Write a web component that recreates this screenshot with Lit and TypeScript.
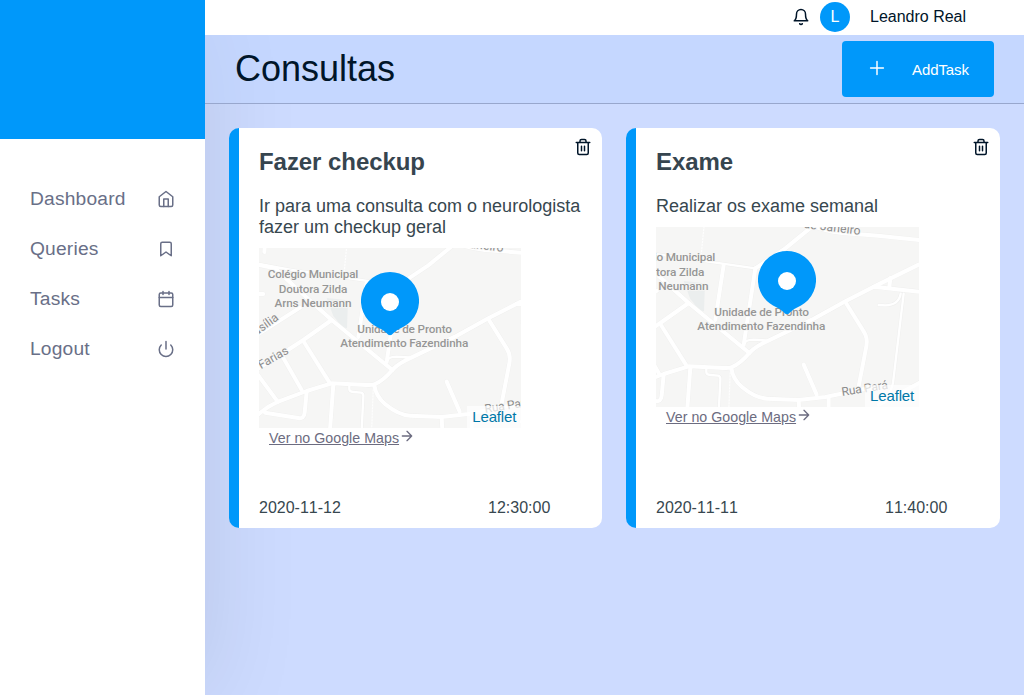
import { LitElement, html, css, svg } from "lit";
import { customElement, property } from "lit/decorators.js";

const stroked = (size: number, paths: unknown, width = 2) => html`
  <svg width=${size} height=${size} viewBox="0 0 24 24" fill="none" stroke="currentColor"
    stroke-width=${width} stroke-linecap="round" stroke-linejoin="round">${paths}</svg>`;

const homeIcon = svg`<path d="M3 9l9-7 9 7v11a2 2 0 0 1-2 2H5a2 2 0 0 1-2-2z"/><path d="M9 22V12h6v10"/>`;
const bookmarkIcon = svg`<path d="M19 21l-7-5-7 5V5a2 2 0 0 1 2-2h10a2 2 0 0 1 2 2z"/>`;
const calendarIcon = svg`<rect x="3" y="4" width="18" height="18" rx="2"/><path d="M16 2v4M8 2v4M3 10h18"/>`;
const powerIcon = svg`<path d="M18.36 6.64a9 9 0 1 1-12.73 0M12 2v10"/>`;
const bellIcon = svg`<path d="M18 8A6 6 0 0 0 6 8c0 7-3 9-3 9h18s-3-2-3-9M13.73 21a2 2 0 0 1-3.46 0"/>`;
const plusIcon = svg`<path d="M12 5v14M5 12h14"/>`;
const trashIcon = svg`<path d="M3 6h18M19 6v14a2 2 0 0 1-2 2H7a2 2 0 0 1-2-2V6m3 0V4a2 2 0 0 1 2-2h4a2 2 0 0 1 2 2v2M10 11v6M14 11v6"/>`;
const arrowIcon = svg`<path d="M5 12h14M12 5l7 7-7 7"/>`;

const wideRoads = [
  "M920 125L798 185L700 235L600 290L450 362Q425 375 412 390Q385 422 360 432Q350 436 335 435L230 430L155 453L70 485Q35 500 5 528",
  "M-110 20L12 75L60 85L130 150L230 240L412 390",
  "M600 11L520 76L430 136",
  "M335 126L310 291",
  "M430 136L405 300L395 366",
  "M230 240L145 300L80 342L5 388",
  "M145 303L225 430",
  "M80 345L140 450",
  "M5 400L68 485",
  "M5 285L135 203",
  "M155 455L149 518Q147 537 130 534L30 518",
  "M235 433L225 570",
  "M358 435Q362 468 390 492Q430 525 465 527L560 531L640 522L798 490",
  "M575 425L614 515",
  "M700 237L755 325Q768 345 763 370L740 490",
  "M580 -4Q620 22 690 30L798 38L930 52",
  "M785 191L930 207",
  "M835 165L832 192",
  "M560 532L562 570M650 523L650 570",
  "M800 545L930 475",
  "M30 10L28 36M2 162L25 162",
];
const mediumRoads = [
  "M12 72L110 90L430 136",
  "M395 366Q398 350 425 350L462 352",
  "M875 212L843 480Q838 510 810 535",
  "M800 246L820 247Q860 247 866 212",
  "M283 436L283 448Q283 455 295 456L318 458Q326 460 325 470L320 570",
];

const mapDrawing = (dx: number, dy: number) => html`
  <svg class="tiles" viewBox="0 0 263 180" preserveAspectRatio="xMinYMin slice">
    <g transform="translate(${dx} ${dy}) scale(.33333) translate(-12 -24)">
      <path d="M215 174L279 181L276 265L262 262L235 228Z" fill="#ebeeee"/>
      <g fill="none" stroke-linecap="round" stroke-linejoin="round">
        ${wideRoads.map((d) => svg`<path d=${d} stroke="#efefee" stroke-width="14"/>`)}
        ${mediumRoads.map((d) => svg`<path d=${d} stroke="#efefee" stroke-width="10"/>`)}
        ${wideRoads.map((d) => svg`<path d=${d} stroke="#fff" stroke-width="12"/>`)}
        ${mediumRoads.map((d) => svg`<path d=${d} stroke="#fff" stroke-width="7"/>`)}
        <path d="M276 10L268 92M355 440L350 570" stroke="#fff" stroke-width="3" stroke-dasharray="4 5"/>
      </g>
      <g class="place">
        <text x="174" y="115" textLength="272">Colégio Municipal</text>
        <text x="174" y="158" textLength="206">Doutora Zilda</text>
        <text x="174" y="201" textLength="231">Arns Neumann</text>
        <text x="449" y="278" textLength="284">Unidade de Pronto</text>
        <text x="448" y="321" textLength="384">Atendimento Fazendinha</text>
      </g>
      <g class="street">
        <text transform="translate(18 388) rotate(-30)" textLength="98">Farias</text>
        <text transform="translate(-24 308) rotate(-36)" textLength="120">Brasília</text>
        <text transform="translate(691 519) rotate(-9)" textLength="140">Rua Pará</text>
        <text transform="translate(512 7) rotate(7)" textLength="234">Rio de Janeiro</text>
      </g>
    </g>
  </svg>`;

interface Appointment {
  title: string;
  text: string;
  date: string;
  time: string;
  dx: number;
  dy: number;
}

@customElement("task-card")
class TaskCard extends LitElement {
  @property({ attribute: false }) item!: Appointment;

  static styles = css`
    :host {
      display: flex; flex-direction: column; position: relative; box-sizing: border-box;
      height: 400px; padding: 20px 20px 10px; background: #fff;
      border-left: 10px solid #0098fa; border-radius: 10px; color: #37474f;
    }
    .remove { position: absolute; top: 10px; right: 10px; color: #001529; display: flex; }
    .title { margin: 0 0 21px; font-size: 24px; line-height: 27px; letter-spacing: -.06px; color: #36454f; font-weight: bold; }
    .text { margin: 0; font-size: 18px; line-height: 21px; }
    .map { position: relative; width: 81.2%; height: 180px; margin-top: 10px; background: #f6f6f5; overflow: hidden; }
    .tiles { display: block; width: 263px; height: 180px; }
    .place { font: 500 35.5px Roboto, sans-serif; fill: #969696; text-anchor: middle; stroke: #f6f6f5; stroke-width: 5px; paint-order: stroke; }
    .street { font: 400 36px Roboto, sans-serif; fill: #8c8c8c; stroke: #f6f6f5; stroke-width: 5px; paint-order: stroke; }
    .pin { position: absolute; left: 102px; top: 24px; }
    .credit { position: absolute; right: 0; bottom: 0; padding: 0 5px; font-size: 15px; letter-spacing: -.15px; line-height: 22px; color: #0078a8; background: rgba(255,255,255,.7); }
    .link { display: flex; margin-left: 10px; font-size: 14.2px; letter-spacing: .04px; line-height: 20px; color: #6c6c80; }
    .link a { color: inherit; text-decoration: underline; }
    .foot { display: grid; grid-template-columns: 229px 1fr; margin-top: auto; font-size: 16px; line-height: 20px; }
    .date { font-kerning: none; }
  `;

  render() {
    const { title, text, date, time, dx, dy } = this.item;
    return html`
      <span class="remove">${stroked(18, trashIcon)}</span>
      <h2 class="title">${title}</h2>
      <p class="text">${text}</p>
      <div class="map">
        ${mapDrawing(dx, dy)}
        <svg class="pin" width="58" height="64" viewBox="0 0 58 64">
          <path fill="#0098fa" d="M29 0A29 29 0 0 1 43 54.4Q36 57.5 32.5 61Q29 65.5 25.5 61Q22 57.5 15 54.4A29 29 0 0 1 29 0Z"/>
          <circle cx="29" cy="30" r="9" fill="#fff"/>
        </svg>
        <span class="credit">Leaflet</span>
      </div>
      <div class="link"><a>Ver no Google Maps</a>${stroked(16, arrowIcon)}</div>
      <div class="foot"><span class="date">${date}</span><span class="date">${time}</span></div>
    `;
  }
}

@customElement("app-root")
class AppRoot extends LitElement {
  static styles = css`
    :host {
      display: grid; grid-template-columns: 205px 1fr; height: 695px; overflow: hidden;
      font-family: "Liberation Sans", Arial, sans-serif; background: #cddbff; color: #001529;
    }
    .side { background: #fff; box-shadow: 0 0 100px rgba(0,0,0,.1); }
    .brand { height: 139px; background: #0098fa; }
    .menu { display: flex; flex-direction: column; padding: 35px 30px; }
    .entry { display: flex; align-items: center; justify-content: space-between; height: 50px; font-size: 19.2px; letter-spacing: .2px; color: #696f87; }
    .main { display: flex; flex-direction: column; min-width: 0; }
    .top { position: relative; display: flex; align-items: center; justify-content: flex-end; height: 35px; padding-right: 57px; box-sizing: border-box; background: #fff; font-size: 16px; }
    .bell { display: flex; margin-right: 10px; }
    .avatar { display: grid; place-items: center; width: 30px; height: 30px; margin-right: 20px; border-radius: 50%; background: #0098fa; color: #fff; }
    .user { width: 97px; white-space: nowrap; }
    .shift { display: flex; align-items: center; height: 33px; align-self: flex-start; }
    .head { display: flex; align-items: center; justify-content: space-between; box-sizing: border-box; height: 69px; padding: 0 30px; background: rgba(190,212,255,.5); border-bottom: 1px solid #98a7cd; }
    .heading { margin: 0; font-size: 36px; font-weight: normal; line-height: 42px; }
    .add { display: flex; align-items: center; box-sizing: border-box; width: 152px; height: 56px; padding-left: 24px; border-radius: 4px; background: #0098fa; color: #fff; font-size: 15px; letter-spacing: -.1px; }
    .plus { display: flex; margin: 0 24px 2px 0; }
    .cards { display: grid; grid-template-columns: 373px 1fr; gap: 24px; padding: 24px; }
  `;

  private menu = [
    { name: "Dashboard", icon: homeIcon },
    { name: "Queries", icon: bookmarkIcon },
    { name: "Tasks", icon: calendarIcon },
    { name: "Logout", icon: powerIcon },
  ];

  private items: Appointment[] = [
    { title: "Fazer checkup", text: "Ir para uma consulta com o neurologista fazer um checkup geral", date: "2020-11-12", time: "12:30:00", dx: 0, dy: 0 },
    { title: "Exame", text: "Realizar os exame semanal", date: "2020-11-11", time: "11:40:00", dx: -40, dy: 4 },
  ];

  render() {
    return html`
      <nav class="side">
        <div class="brand"></div>
        <div class="menu">
          ${this.menu.map((m) => html`<div class="entry"><span>${m.name}</span>${stroked(18, m.icon)}</div>`)}
        </div>
      </nav>
      <div class="main">
        <div class="top">
          <div class="shift">
            <span class="bell">${stroked(18, bellIcon)}</span>
            <span class="avatar">L</span>
            <span class="user">Leandro Real</span>
          </div>
        </div>
        <div class="head">
          <h1 class="heading">Consultas</h1>
          <div class="add"><span class="plus">${stroked(22, plusIcon, 1.6)}</span><span>AddTask</span></div>
        </div>
        <div class="cards">
          ${this.items.map((i) => html`<task-card .item=${i}></task-card>`)}
        </div>
      </div>
    `;
  }
}
